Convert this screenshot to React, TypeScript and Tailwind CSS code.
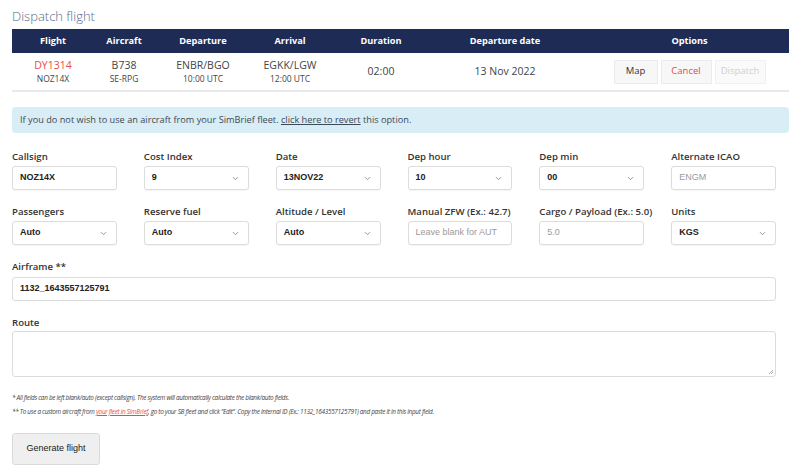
import React from "react";

const seg = { fontFamily: '"Open Sans", "Noto Sans", sans-serif' };
const ari = { fontFamily: '"Liberation Sans", Arial, sans-serif' };

function Chevron() {
  return (
    <svg width="7" height="5" viewBox="0 0 7 5" className="shrink-0">
      <path d="M1 1.2l2.5 2.5 2.5-2.5" fill="none" stroke="#888" strokeWidth="0.9" />
    </svg>
  );
}

function Label({ children }: { children: React.ReactNode }) {
  return (
    <div className="text-[9.6px] font-semibold text-[#333] h-[14px] leading-[14px] whitespace-nowrap" style={seg}>
      {children}
    </div>
  );
}

function Field({ label, value, select, placeholder }: { label: string; value?: string; select?: boolean; placeholder?: string }) {
  return (
    <div className="flex flex-col">
      <div className="mb-[2px]">
        <Label>{label}</Label>
      </div>
      <div className="h-[24px] border border-[#dcdcdc] rounded-[3px] bg-white flex items-center justify-between pl-[7px] pr-[9px] overflow-hidden whitespace-nowrap shadow-[0_1px_1px_rgba(0,0,0,0.04)]">
        {value !== undefined ? (
          <span className="text-[9px] text-[#222] font-bold" style={ari}>{value}</span>
        ) : (
          <span className="text-[9px] text-[#9a9a9a]" style={ari}>{placeholder}</span>
        )}
        {select && <Chevron />}
      </div>
    </div>
  );
}

export default function App() {
  const cols = [
    { t: "Flight", w: "w-[82px]" },
    { t: "Aircraft", w: "w-[60px]" },
    { t: "Departure", w: "w-[98px]" },
    { t: "Arrival", w: "w-[76px]" },
    { t: "Duration", w: "w-[106px]" },
    { t: "Departure date", w: "w-[142px]" },
  ];
  return (
    <div className="w-[800px] h-[475px] bg-white px-[12px] pt-[4px] overflow-hidden" style={seg}>
      <div className="text-[13px] font-light text-[#5a6a88] h-[25px] leading-[25px]">Dispatch flight</div>

      {/* table */}
      <div className="w-[777px]">
        <div className="flex h-[24px] bg-[#1e2c55] items-center text-white text-[9.2px] font-bold">
          {cols.map((c) => (
            <div key={c.t} className={`${c.w} text-center`}>{c.t}</div>
          ))}
          <div className="flex-1 text-center pl-[14px]">Options</div>
        </div>
        <div className="flex h-[39px] items-center border-b-2 border-[#e9e9e9] text-[#444]">
          <div className="w-[82px] flex flex-col items-center leading-[14px]">
            <span className="text-[10.5px] text-[#e74c4c]">DY1314</span>
            <span className="text-[8.5px]">NOZ14X</span>
          </div>
          <div className="w-[60px] flex flex-col items-center leading-[14px]">
            <span className="text-[10.5px]">B738</span>
            <span className="text-[8.5px]">SE-RPG</span>
          </div>
          <div className="w-[98px] flex flex-col items-center leading-[14px]">
            <span className="text-[10.5px]">ENBR/BGO</span>
            <span className="text-[8.5px]">10:00 UTC</span>
          </div>
          <div className="w-[76px] flex flex-col items-center leading-[14px]">
            <span className="text-[10.5px]">EGKK/LGW</span>
            <span className="text-[8.5px]">12:00 UTC</span>
          </div>
          <div className="w-[106px] text-center text-[10.5px]">02:00</div>
          <div className="w-[142px] text-center text-[10.5px]">13 Nov 2022</div>
          <div className="flex-1 flex justify-center pl-[14px] gap-[3px]">
            <div className="w-[44px] h-[24px] flex items-center justify-center bg-[#f7f7f7] border border-[#ebebeb] text-[9.5px] text-[#333]">Map</div>
            <div className="w-[51px] h-[24px] flex items-center justify-center bg-[#f7f7f7] border border-[#ebebeb] text-[9.5px] text-[#ef4444]">Cancel</div>
            <div className="w-[51px] h-[24px] flex items-center justify-center bg-[#fafafa] border border-[#f0f0f0] text-[9.5px] text-[#cfcfcf]">Dispatch</div>
          </div>
        </div>
      </div>

      {/* alert */}
      <div className="w-[777px] mt-[15px] h-[26px] bg-[#d9edf7] rounded-[4px] flex items-center pl-[8px] text-[9.2px] text-[#3b4a54]">
        <span>
          If you do not wish to use an aircraft from your SimBrief fleet. <span className="underline">click here to revert</span> this option.
        </span>
      </div>

      {/* form */}
      <div className="w-[764px] mt-[17px] grid grid-cols-6 gap-x-[27px] gap-y-[15px]">
        <Field label="Callsign" value="NOZ14X" />
        <Field label="Cost Index" value="9" select />
        <Field label="Date" value="13NOV22" select />
        <Field label="Dep hour" value="10" select />
        <Field label="Dep min" value="00" select />
        <Field label="Alternate ICAO" placeholder="ENGM" />
        <Field label="Passengers" value="Auto" select />
        <Field label="Reserve fuel" value="Auto" select />
        <Field label="Altitude / Level" value="Auto" select />
        <Field label="Manual ZFW (Ex.: 42.7)" placeholder="Leave blank for AUT" />
        <Field label="Cargo / Payload (Ex.: 5.0)" placeholder="5.0" />
        <Field label="Units" value="KGS" select />
      </div>

      <div className="w-[764px] mt-[15px]">
        <div className="mb-[3px]">
          <Label>Airframe **</Label>
        </div>
        <div className="h-[24px] border border-[#dcdcdc] rounded-[3px] flex items-center pl-[7px]">
          <span className="text-[9px] text-[#222] font-bold" style={ari}>1132_1643557125791</span>
        </div>
      </div>

      <div className="w-[764px] mt-[15px]">
        <div className="mb-[1px]">
          <Label>Route</Label>
        </div>
        <div className="h-[46px] border border-[#dcdcdc] rounded-[3px] relative">
          <svg width="6" height="6" viewBox="0 0 6 6" className="absolute right-[1px] bottom-[1px]">
            <path d="M5 1L1 5M5 3L3 5" stroke="#999" strokeWidth="0.8" />
          </svg>
        </div>
      </div>

      <div className="mt-[14px] text-[6.4px] italic text-[#444] leading-[14px] tracking-[-0.3px]">
        <div>* All fields can be left blank/auto (except callsign). The system will automatically calculate the blank/auto fields.</div>
        <div>
          ** To use a custom aircraft from <span className="underline text-[#e74c4c]">your fleet in SimBrief</span>, go to your SB fleet and click "Edit". Copy the internal ID (Ex.: 1132_1643557125791) and paste it in this input field.
        </div>
      </div>

      <div className="mt-[14px] w-[88px] h-[32px] bg-[#efefef] border border-[#dadada] rounded-[3px] flex items-center justify-center text-[9px] text-[#222]" style={ari}>
        Generate flight
      </div>
    </div>
  );
}
